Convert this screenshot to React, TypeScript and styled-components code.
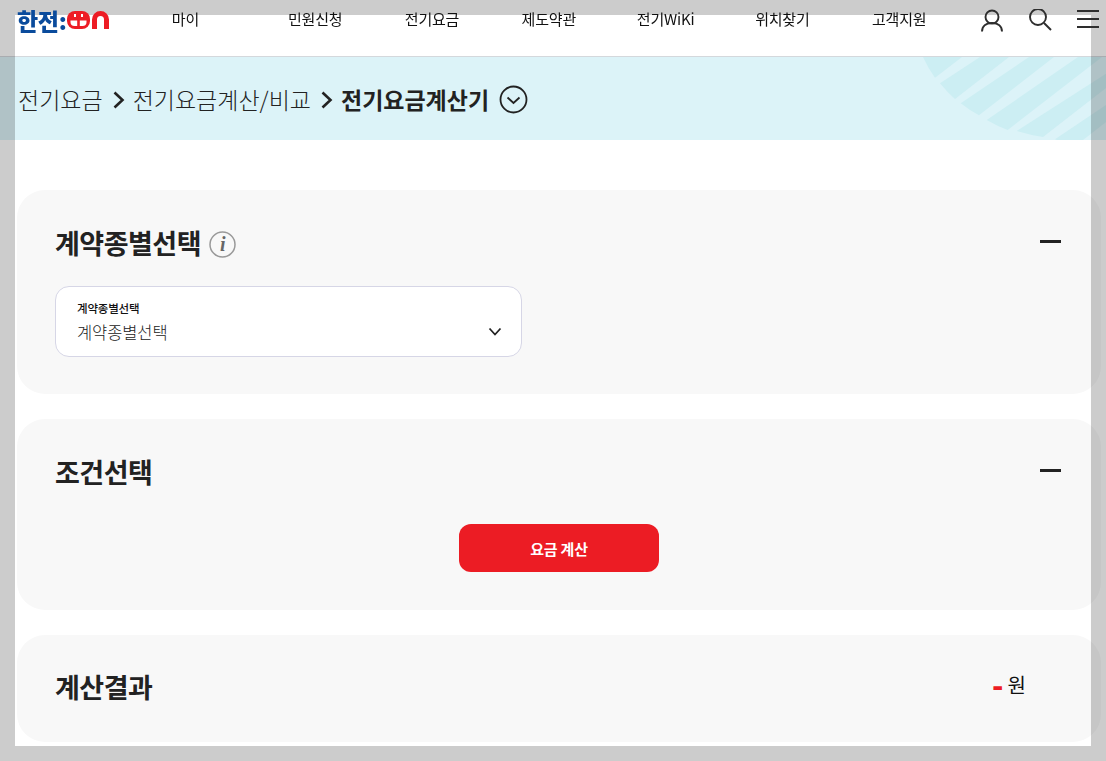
import React from "react";
import styled, { createGlobalStyle } from "styled-components";

const Global = createGlobalStyle`
  html, body { margin: 0; padding: 0; height: 761px; overflow: hidden; background: #fff; }
  body { font-family: "Noto Sans CJK KR", "Noto Sans", sans-serif; color: #222; }
`;
const Frame = styled.div`
  position: fixed; inset: 0; z-index: 5; pointer-events: none;
  border: 15px solid rgba(0,0,0,.2);
`;
const Header = styled.header`
  position: relative; z-index: 6; height: 56px; display: flex; align-items: flex-start;
`;
const Logo = styled.div`
  flex: none; width: 109px; height: 18px; padding: 11px 0 0 17px; display: flex; align-items: center;
`;
const LogoText = styled.span`
  font-size: 23px; font-weight: 900; color: #0a4b9c; line-height: 18px; letter-spacing: -.3px; white-space: nowrap; width: 50px; flex: none;
`;
const Nav = styled.nav`
  display: flex; flex: none; margin-left: 1px;
`;
const NavItem = styled.a`
  width: 116.8px; flex: none; text-align: center; font-size: 15px; line-height: 20px; padding-top: 9px; color: #111; letter-spacing: -.2px;
  &:first-child { margin-right: 13px; }
`;
const Icons = styled.div`
  display: flex; align-items: flex-start; gap: 24px; padding: 9px 7px 0 0; margin-left: auto;
`;
const Band = styled.section`
  position: relative; height: 83px; box-sizing: content-box; background: #dcf3f8; border-top: 1px solid #d4d8dc; display: flex; align-items: center; padding-left: 18px; overflow: hidden;
`;
const Crumbs = styled.div`
  display: flex; align-items: center; margin-top: 2px;
`;
const Crumb = styled.span<{ $b?: boolean }>`
  font-size: 23px; font-weight: ${p => p.$b ? 700 : 300}; color: #222; line-height: 1; white-space: nowrap;
`;
const Wave = styled.svg`
  position: absolute; right: 0; top: 0;
`;
const Main = styled.main`
  padding: 50px 5px 0 17px; display: flex; flex-direction: column; gap: 25px;
`;
const Card = styled.div<{ $h: number }>`
  height: ${p => p.$h}px; box-sizing: border-box; background: #f8f8f8; border-radius: 28px; padding: 32px 40px 0 38px; position: relative;
`;
const TitleRow = styled.div`
  display: flex; align-items: center; justify-content: space-between; height: 42px;
`;
const ResultRow = styled(TitleRow)`
  margin-top: -1px;
`;
const Title = styled.h2`
  margin: 0; font-size: 27px; font-weight: 700; letter-spacing: -.5px; line-height: 42px; color: #222; display: flex; align-items: center; gap: 8px;
`;
const InfoIcon = styled.svg`
  margin-top: 2px;
`;
const Dash = styled.i`
  display: block; width: 21px; height: 3px; background: #222; margin-top: -4px;
`;
const Select = styled.div`
  margin-top: 22px; width: 467px; height: 71px; box-sizing: border-box; background: #fff; border: 1px solid #d6d6e6; border-radius: 14px; padding: 13px 18px 0 21px; position: relative;
`;
const SelectLabel = styled.div`
  font-size: 11.5px; font-weight: 500; line-height: 16px; color: #111; letter-spacing: -.2px;
`;
const SelectValue = styled.div`
  font-size: 16.5px; font-weight: 300; line-height: 24px; color: #222; margin-top: 4px; letter-spacing: -.1px;
`;
const Chevron = styled.svg`
  position: absolute; right: 19px; top: 40px;
`;
const CalcWrap = styled.div`
  display: flex; justify-content: center; margin-top: 31px; padding-left: 2px;
`;
const CalcBtn = styled.button`
  width: 200px; height: 48px; border: 0; border-radius: 12px; background: #ec1c24; color: #fff; font: 700 15px "Noto Sans CJK KR", sans-serif; letter-spacing: -.2px;
`;
const Result = styled.div`
  display: flex; align-items: center; gap: 4px; margin-right: 35px; font-size: 20px; font-weight: 400; color: #111; margin-top: -6px;
`;
const Minus = styled.b`
  color: #ed1c24; font-weight: 900; font-size: 30px; line-height: 24px;
`;

const navItems = ["마이", "민원신청", "전기요금", "제도약관", "전기WiKi", "위치찾기", "고객지원"];

const Sep = () => (
  <svg width="14" height="20" viewBox="0 0 14 20" style={{ margin: "0 7px 0 9px" }}>
    <path d="M2.500 2.500 10.500 10 2.500 17.500" fill="none" stroke="#222" strokeWidth="2.600" />
  </svg>
);

export default function App() {
  return (
    <>
      <Global />
      <Frame />
      <Header>
        <Logo>
          <LogoText>한전:</LogoText>
          <svg width="42" height="18" viewBox="0 0 42 18">
            <rect x="0" y="0" width="23" height="18" rx="8" fill="#ed1c24" />
            <path d="M3.500 9.500h16v1.500a4 4 0 0 1-4 4h-8a4 4 0 0 1-4-4Z" fill="#fff" />
            <rect x="10.200" y="9" width="2.600" height="9" fill="#ed1c24" />
            <rect x="7" y="3" width="2" height="3" fill="#fff" />
            <rect x="14" y="3" width="2" height="3" fill="#fff" />
            <path d="M27.500 18V8.500a6 6 0 0 1 6-6a6 6 0 0 1 6 6V18" fill="none" stroke="#ed1c24" strokeWidth="5" />
          </svg>
        </Logo>
        <Nav>
          {navItems.map(n => <NavItem key={n}>{n}</NavItem>)}
        </Nav>
        <Icons>
          <svg width="24" height="24" viewBox="0 0 24 24" fill="none" stroke="#2e2e2e" strokeWidth="1.900">
            <circle cx="11" cy="8" r="6.500" />
            <path d="M1 22.500c0-5.500 4-8.500 10-8.500s10 3 10 8.500" />
          </svg>
          <svg width="24" height="24" viewBox="0 0 24 24" fill="none" stroke="#2e2e2e" strokeWidth="1.900">
            <circle cx="9" cy="8" r="8" />
            <path d="M15 14l7 7" />
          </svg>
          <svg width="22" height="20" viewBox="0 0 22 20" stroke="#2e2e2e" strokeWidth="2">
            <path d="M0 2h22M0 10h22M0 18h22" />
          </svg>
        </Icons>
      </Header>
      <Band>
        <Wave width="190" height="83" viewBox="0 0 190 83">
          <path d="M7 0Q12 11 19 20.700L46 0Z" fill="#cceef3" />
          <path d="M24 26.300Q31 35 39 42L93 0H64Z" fill="#cceef3" />
          <path d="M44.700 46.300Q53 53 63 58.300L138 0H113Z" fill="#cceef3" />
          <path d="M70.700 63Q81 69 91.700 73L186 0H162Z" fill="#cceef3" />
          <path d="M100.700 74Q114 78 127 80L190 31V16.700Z" fill="#cceef3" />
          <path d="M139 82.300 141 83H167L190 65V48Z" fill="#cceef3" />
        </Wave>
        <Crumbs>
          <Crumb>전기요금</Crumb><Sep />
          <Crumb>전기요금계산/비교</Crumb><Sep />
          <Crumb $b>전기요금계산기</Crumb>
          <svg width="29" height="29" viewBox="0 0 29 29" fill="none" stroke="#222" strokeWidth="1.800" style={{ marginLeft: 10 }}>
            <circle cx="14.500" cy="14.500" r="13" />
            <path d="M8.500 12.500l6 5.500 6-5.500" />
          </svg>
        </Crumbs>
      </Band>
      <Main>
        <Card $h={204}>
          <TitleRow>
            <Title>
              계약종별선택
              <InfoIcon width="27" height="27" viewBox="0 0 27 27">
                <circle cx="13.500" cy="13.500" r="12.500" fill="none" stroke="#999" strokeWidth="1.500" />
                <text x="13.500" y="20" textAnchor="middle" fontFamily="Liberation Serif, serif" fontStyle="italic" fontWeight="700" fontSize="20" fill="#666">i</text>
              </InfoIcon>
            </Title>
            <Dash />
          </TitleRow>
          <Select>
            <SelectLabel>계약종별선택</SelectLabel>
            <SelectValue>계약종별선택</SelectValue>
            <Chevron width="14" height="10" viewBox="0 0 14 10" fill="none" stroke="#222" strokeWidth="1.800">
              <path d="M1.500 1.500 7 7.500l5.500-6" />
            </Chevron>
          </Select>
        </Card>
        <Card $h={191}>
          <TitleRow>
            <Title>조건선택</Title>
            <Dash />
          </TitleRow>
          <CalcWrap><CalcBtn>요금 계산</CalcBtn></CalcWrap>
        </Card>
        <Card $h={107}>
          <ResultRow>
            <Title>계산결과</Title>
            <Result><Minus>-</Minus>원</Result>
          </ResultRow>
        </Card>
      </Main>
    </>
  );
}
